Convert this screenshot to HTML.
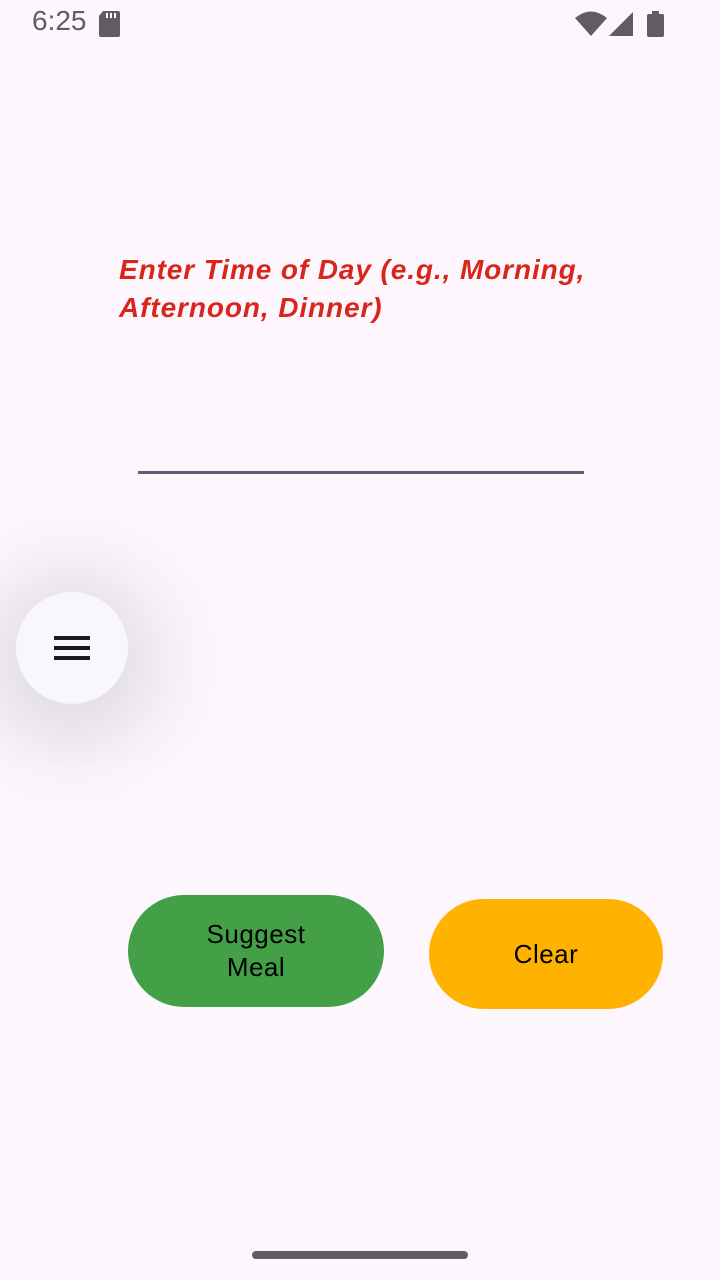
<!DOCTYPE html>
<html><head><meta charset="utf-8"><style>
html,body{margin:0;padding:0;}
body{width:720px;height:1280px;background:#fdf7fd;position:relative;overflow:hidden;font-family:"Liberation Sans",sans-serif;}
.abs{position:absolute;}
</style></head><body>
<div class="abs" style="left:32px;top:5px;font-size:28px;color:#5f5c62;">6:25</div>
<svg class="abs" style="left:98px;top:11px" width="24" height="26" viewBox="0 0 24 26"><path d="M5 0h15a2 2 0 0 1 2 2v22a2 2 0 0 1-2 2H3a2 2 0 0 1-2-2V5z" fill="#5f5c62"/><rect x="8" y="2" width="2" height="5" fill="#fff"/><rect x="12" y="2" width="2" height="5" fill="#fff"/><rect x="16" y="2" width="2" height="5" fill="#fff"/></svg>
<svg class="abs" style="left:575px;top:11px" width="92" height="26" viewBox="0 0 92 26"><path d="M0 7 Q16 -6 32 7 L16 25Z" fill="#5f5c62"/><path d="M34 25 L58 1 V25Z" fill="#5f5c62"/><rect x="72" y="3" width="17" height="23" rx="2" fill="#5f5c62"/><rect x="77" y="0" width="7" height="4" fill="#5f5c62"/></svg>
<div class="abs" style="left:119px;top:251px;width:560px;font-size:28px;line-height:38px;font-weight:bold;font-style:italic;color:#d9261c;letter-spacing:0.9px;">Enter Time of Day (e.g., Morning,<br>Afternoon, Dinner)</div>
<div class="abs" style="left:138px;top:471px;width:446px;height:3px;background:#625b71;"></div>
<div class="abs" style="left:16px;top:592px;width:112px;height:112px;border-radius:50%;background:#f7f8fc;box-shadow:0 12px 80px 30px rgba(120,110,125,0.22);"></div>
<div class="abs" style="left:54px;top:636px;width:36px;height:4px;background:#1a1a22;box-shadow:0 10px 0 #1a1a22,0 20px 0 #1a1a22;"></div>
<div class="abs" style="left:128px;top:895px;width:256px;height:112px;border-radius:56px;background:#43a047;display:flex;align-items:center;justify-content:center;text-align:center;font-size:26px;line-height:33px;color:#000;letter-spacing:0.5px;">Suggest<br>Meal</div>
<div class="abs" style="left:429px;top:899px;width:234px;height:110px;border-radius:55px;background:#ffb300;display:flex;align-items:center;justify-content:center;font-size:26px;color:#000;letter-spacing:0.5px;">Clear</div>
<div class="abs" style="left:252px;top:1251px;width:216px;height:8px;border-radius:4px;background:#5f5c62;"></div>
</body></html>
